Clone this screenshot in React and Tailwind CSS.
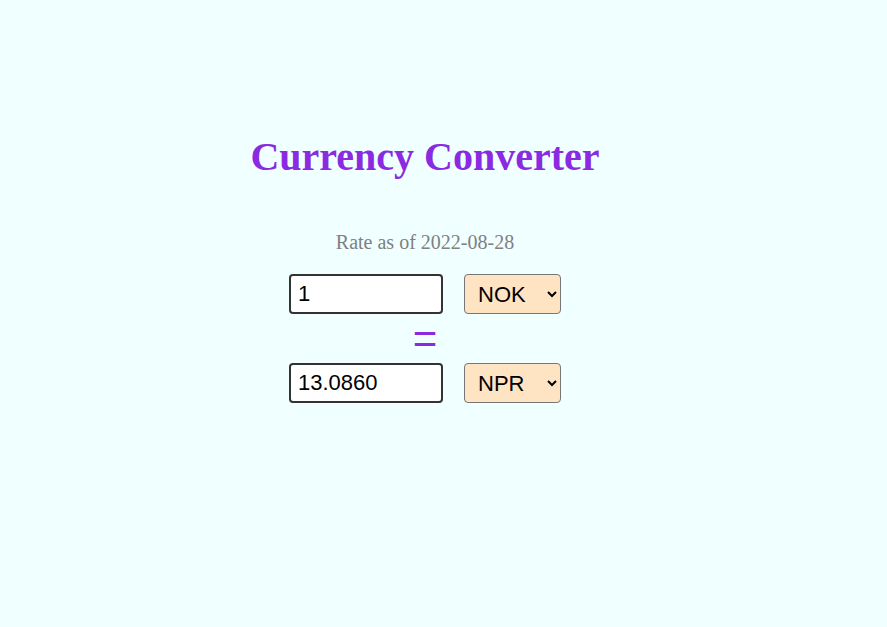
import { useState } from "react";

const RATES = { NOK: 1, NPR: 13.086 };

export default function App() {
  const [amount, setAmount] = useState("1");
  const [from, setFrom] = useState("NOK");
  const [to, setTo] = useState("NPR");
  const result = ((parseFloat(amount) || 0) * (RATES[to] / RATES[from])).toFixed(4);

  const inputCls =
    "w-[154px] h-[40px] px-[7px] border-2 border-[#333] rounded-[4px] bg-white text-[22px] text-black font-['Liberation_Sans',Arial,sans-serif] outline-none";
  const selectCls =
    "w-[97px] h-[40px] pl-[9px] border border-[#767676] rounded-[4px] bg-[#FFE4C4] text-[22px] text-black font-['Liberation_Sans',Arial,sans-serif]";

  return (
    <div className="min-h-[627px] w-full bg-[#F0FFFF] font-['Liberation_Serif',serif]">
      <div className="w-[850px] flex flex-col items-center pt-[134px]">
        <h1 className="text-[40px] leading-[46px] font-bold text-[#8A2BE2]">Currency Converter</h1>
        <p className="mt-[50px] text-[20px] leading-[24px] text-[#808080]">Rate as of 2022-08-28</p>
        <div className="mt-[20px] flex items-center gap-[21px]">
          <input className={inputCls} value={amount} onChange={(e) => setAmount(e.target.value)} />
          <select className={selectCls} value={from} onChange={(e) => setFrom(e.target.value)}>
            <option>NOK</option>
            <option>NPR</option>
          </select>
        </div>
        <div className="h-[49px] flex items-center justify-center text-[#8A2BE2] text-[42px] font-normal leading-none font-['Liberation_Sans',Arial,sans-serif]">
          =
        </div>
        <div className="flex items-center gap-[21px]">
          <input className={inputCls} value={result} readOnly />
          <select className={selectCls} value={to} onChange={(e) => setTo(e.target.value)}>
            <option>NOK</option>
            <option>NPR</option>
          </select>
        </div>
      </div>
    </div>
  );
}
